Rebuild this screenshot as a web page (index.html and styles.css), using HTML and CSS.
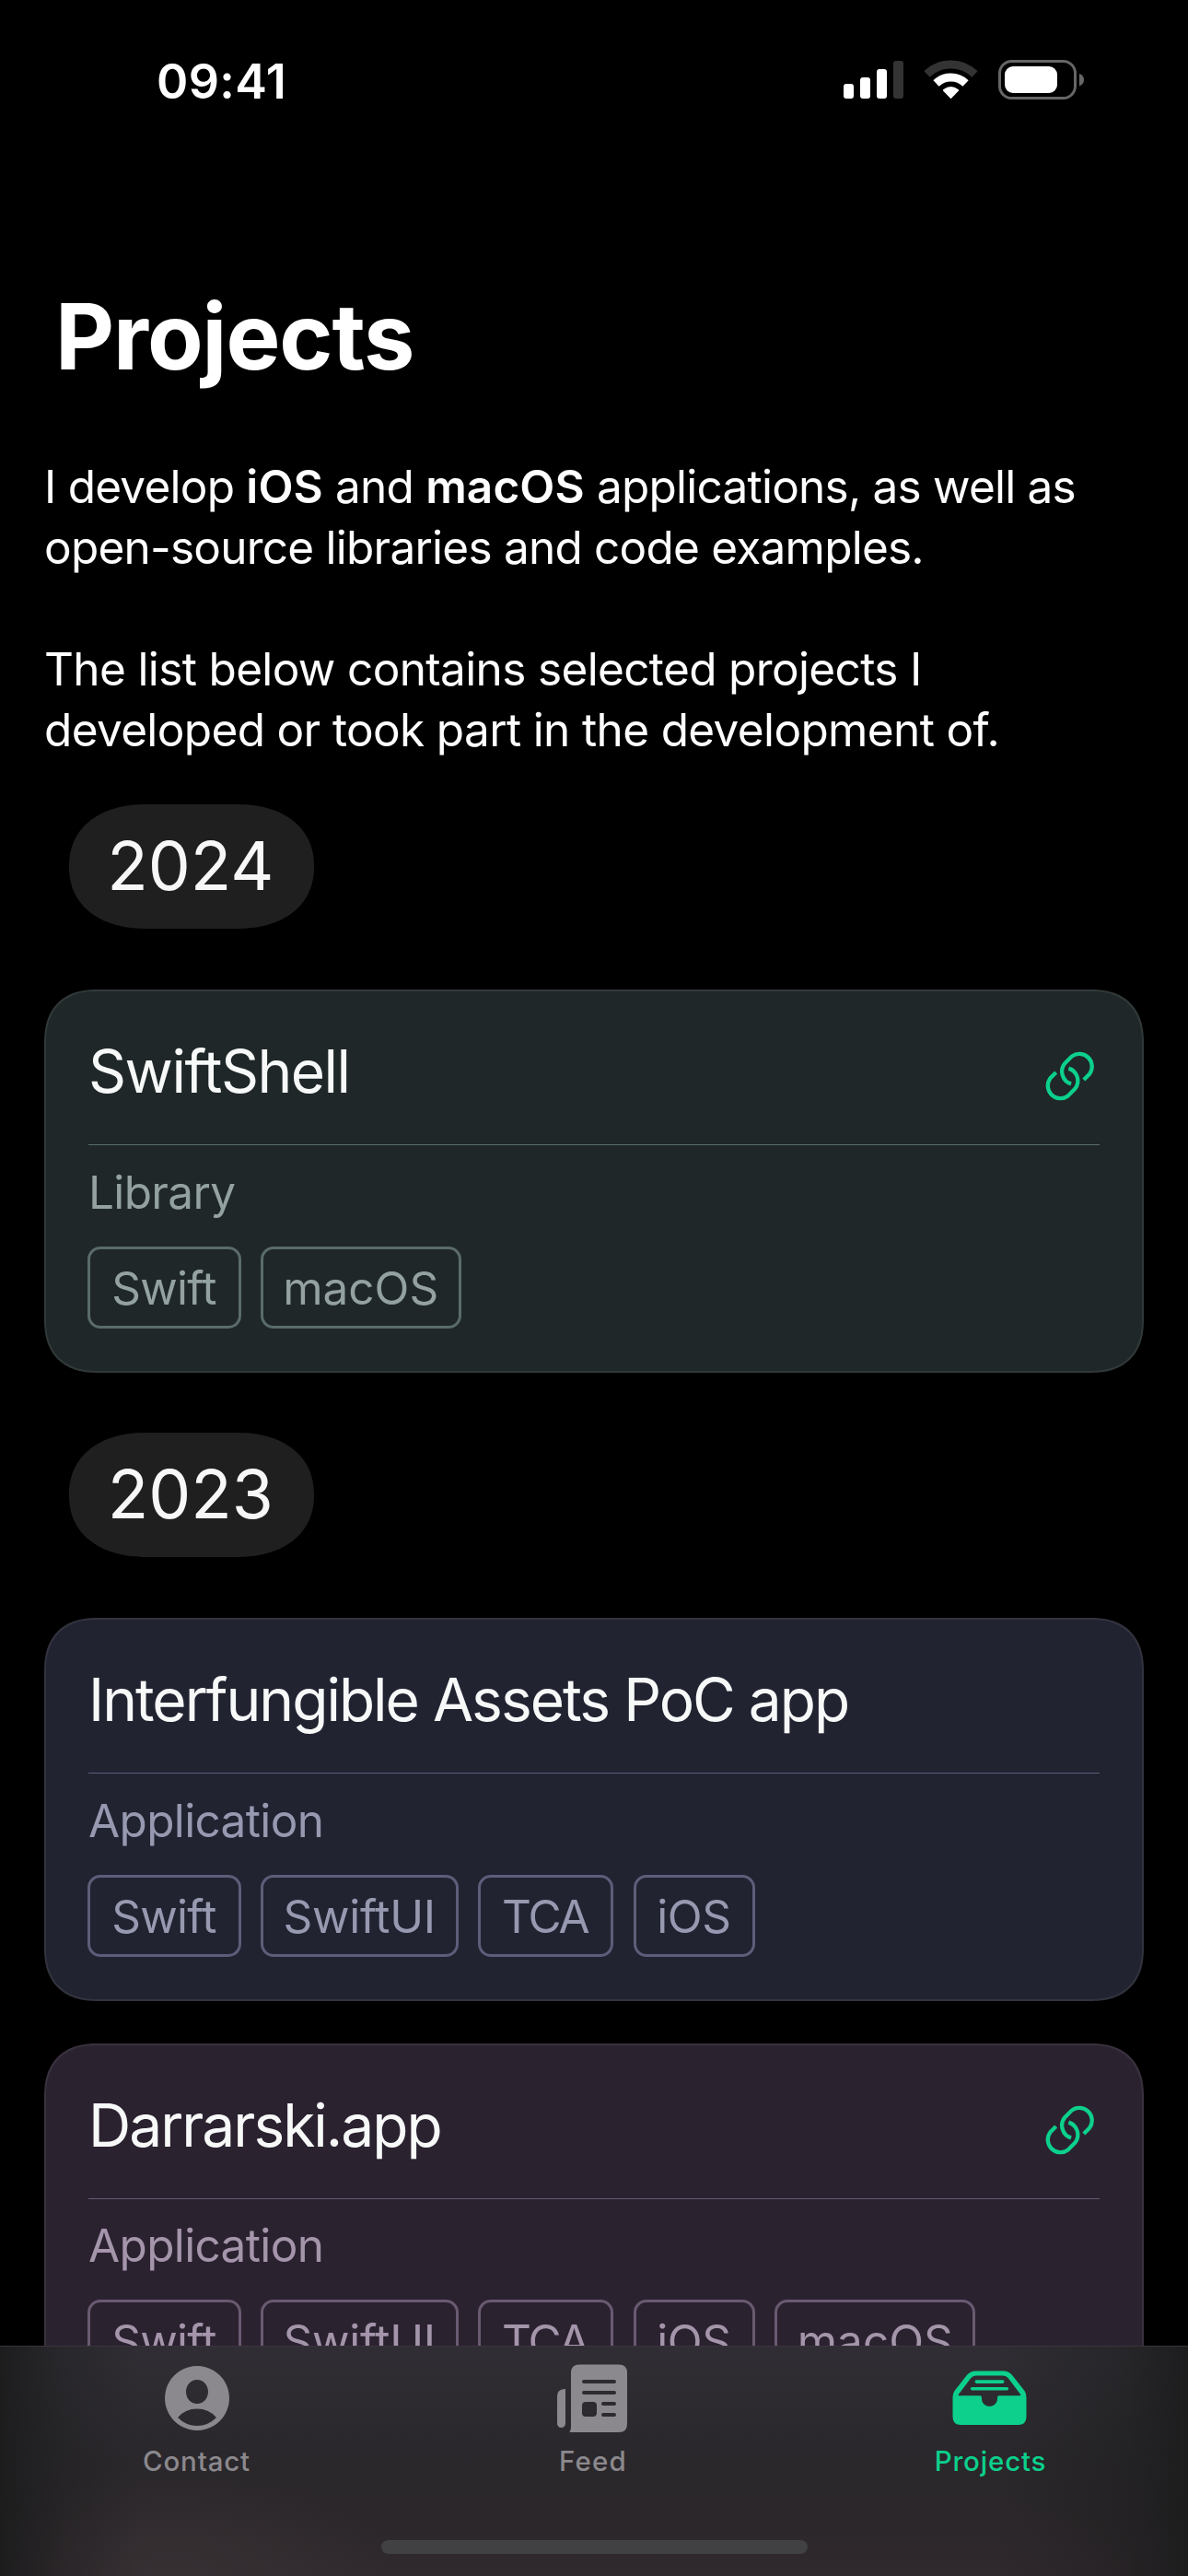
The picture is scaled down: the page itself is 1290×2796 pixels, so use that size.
FILE: index.html
```html
<!DOCTYPE html>
<html lang="en">
<head>
<meta charset="utf-8">
<title>Projects</title>
<link rel="stylesheet" href="styles.css">
</head>
<body>
<svg class="sprite" aria-hidden="true">
  <symbol id="link" viewBox="105 62 162 163">
    <g fill="none" stroke="currentColor" stroke-width="12.5">
      <path d="M230 155 L248 137 A40 40 0 0 0 192 81 L170 103 A41 41 0 0 0 190 168"/>
      <path d="M142 132 L124 150 A40 40 0 0 0 180 206 L202 184 A41 41 0 0 0 182 119"/>
    </g>
  </symbol>
</svg>
<div class="screen">
  <header class="status">
    <span class="time">09:41</span>
    <svg class="indicators" width="262" height="45" viewBox="916 64 262 45">
      <g fill="#fff">
        <rect x="916" y="91" width="11" height="16" rx="3"/>
        <rect x="934" y="84" width="11" height="23" rx="3"/>
        <rect x="952" y="75" width="11" height="32" rx="3"/>
        <rect x="970" y="66" width="11" height="41" rx="3" fill="#333"/>
      </g>
      <path fill="none" stroke="#333" stroke-width="9" d="M1006.5 80.5 A37.5 37.5 0 0 1 1058.500 80.500"/>
      <path fill="none" stroke="#fff" stroke-width="9" d="M1016.500 90.500 A23 23 0 0 1 1048.500 90.500"/>
      <path fill="#fff" d="M1032.500 107.300 L1024 98.600 Q1023.500 97.600 1024.500 97 Q1032.500 91.200 1040.500 97 Q1041.500 97.600 1041 98.600 Z"/>
      <rect x="1085.500" y="66.500" width="82" height="40" rx="13" fill="none" stroke="#666" stroke-width="3"/>
      <rect x="1091" y="72" width="57" height="29" rx="9" fill="#fff"/>
      <path d="M1172 80 Q1177 81.500 1177 86.500 Q1177 91.500 1172 93.500 Z" fill="#666"/>
    </svg>
  </header>

  <main class="content">
    <h1>Projects</h1>
    <div class="intro">
      <p><span class="lead">I develop <b>iOS</b> and <b>macOS</b> applications, as well as</span><br><span class="second">open-source libraries and code examples.</span></p>
      <p>The list below contains selected projects I<br>developed or took part in the development of.</p>
    </div>

    <h2 class="year">2024</h2>
    <article class="card green">
      <div class="card-head">
        <h3 class="t-swiftshell">SwiftShell</h3>
        <svg class="link"><use href="#link"/></svg>
      </div>
      <p class="kind">Library</p>
      <div class="tags"><span class="tag swift">Swift</span><span class="tag macos">macOS</span></div>
    </article>

    <h2 class="year">2023</h2>
    <article class="card blue">
      <div class="card-head"><h3>Interfungible Assets PoC app</h3></div>
      <p class="kind">Application</p>
      <div class="tags"><span class="tag swift">Swift</span><span class="tag swiftui">SwiftUI</span><span class="tag tca">TCA</span><span class="tag ios">iOS</span></div>
    </article>

    <article class="card purple">
      <div class="card-head">
        <h3>Darrarski.app</h3>
        <svg class="link"><use href="#link"/></svg>
      </div>
      <p class="kind">Application</p>
      <div class="tags"><span class="tag swift">Swift</span><span class="tag swiftui">SwiftUI</span><span class="tag tca">TCA</span><span class="tag ios">iOS</span><span class="tag macos">macOS</span></div>
    </article>
  </main>

  <footer class="dock">
    <nav class="tabs">
      <a class="tab">
        <svg width="90" height="80" viewBox="169 2562 90 80">
          <path fill="currentColor" fill-rule="evenodd" d="M214 2568 a35 35 0 1 0 .01 0 Z M214 2583 c7 0 12 6 12 13 c0 7 -5 13 -12 13 c-7 0 -12 -6 -12 -13 c0 -7 5 -13 12 -13 Z M193 2624 Q201 2614.500 214 2614.500 Q227 2614.500 235 2624 Q226 2633 214 2633 Q202 2633 193 2624 Z"/>
        </svg>
        <span>Contact</span>
      </a>
      <a class="tab">
        <svg width="90" height="80" viewBox="599 2562 90 80">
          <path fill="currentColor" fill-rule="evenodd" d="M629 2566.500 H672 Q681 2566.500 681 2575.500 V2631 Q681 2640 672 2640 H619 Q618 2639.500 619 2638.500 Q620 2637 620 2634 V2575.500 Q620 2566.500 629 2566.500 Z
            M634 2583 a2 2 0 0 0 0 4 H667 a2 2 0 0 0 0 -4 Z M634 2595 a2 2 0 0 0 0 4 H667 a2 2 0 0 0 0 -4 Z
            M636 2607 Q632 2607 632 2611 V2619 Q632 2623 636 2623 H644 Q648 2623 648 2619 V2611 Q648 2607 644 2607 Z
            M655 2607 a2 2 0 0 0 0 4 H667 a2 2 0 0 0 0 -4 Z M655 2619 a2 2 0 0 0 0 4 H667 a2 2 0 0 0 0 -4 Z"/>
          <path fill="currentColor" d="M614 2593 V2630.500 a4.500 4.500 0 0 1 -9 0 V2600.500 Q605 2593 614 2593 Z"/>
        </svg>
        <span class="feed-label">Feed</span>
      </a>
      <a class="tab active">
        <svg width="90" height="80" viewBox="1030.500 2562 90 80">
          <path fill="currentColor" fill-rule="evenodd" d="M1059 2573.500 H1089 Q1095 2573.500 1099 2578.500 L1112 2595 Q1114 2598 1114 2602 V2623 Q1114 2632 1105 2632 H1043 Q1034 2632 1034 2623 V2602 Q1034 2598 1036 2595 L1049 2578.500 Q1053 2573.500 1059 2573.500 Z
            M1060 2578.500 Q1056 2578.500 1053.500 2581.500 L1040.300 2599 Q1039.700 2600.200 1041 2600.200 H1063.500 Q1065.500 2600.200 1065.500 2602.500 V2603.500 C1065.500 2608.500 1069.500 2611.800 1074 2611.800 C1078.500 2611.800 1082.500 2608.500 1082.500 2603.500 V2602.500 Q1082.500 2600.200 1084.500 2600.200 H1107 Q1108.300 2600.200 1107.700 2599 L1094.500 2581.500 Q1092 2578.500 1088 2578.500 Z"/>
          <rect x="1058" y="2583.300" width="32" height="3.600" rx="1.800" fill="currentColor"/>
          <rect x="1053.300" y="2591" width="41.400" height="3.600" rx="1.800" fill="currentColor"/>
        </svg>
        <span>Projects</span>
      </a>
    </nav>
    <div class="home-indicator"></div>
  </footer>
</div>
</body>
</html>
```
FILE: styles.css
```css
* { box-sizing: border-box; margin: 0; padding: 0; }
body { background: #000; color: #fff; font-family: Inter, sans-serif; }
.sprite { display: none; }
.screen {
  width: 1290px;
  height: 2796px;
  display: flex;
  flex-direction: column;
  overflow: hidden;
}

/* Status bar */
.status {
  flex: none;
  height: 305px;
  padding: 53px 112px 0 170px;
  display: flex;
  justify-content: space-between;
  align-items: flex-start;
}
.time { font-size: 52px; line-height: 72px; font-weight: 600; letter-spacing: .4px; }
.indicators { margin-top: 11px; }

/* Scrolling content */
.content {
  height: 2241px;
  flex: none;
  overflow: hidden;
  padding: 0 48px;
  display: flex;
  flex-direction: column;
  align-items: stretch;
}
h1 { margin-left: 12px; font-size: 99px; line-height: 120px; font-weight: 700; letter-spacing: -1.05px; }
.intro {
  margin: 70px 0 48px;
  display: flex;
  flex-direction: column;
  gap: 66px;
  font-size: 49.5px;
  line-height: 66px;
  letter-spacing: -.64px;
  white-space: nowrap;
}
.lead { letter-spacing: -.77px; }
.second { letter-spacing: -.77px; }
.intro b { font-weight: 600; letter-spacing: .1px; }
.year {
  flex: none;
  align-self: flex-start;
  width: 265.500px;
  height: 134.500px;
  margin: 0 0 66.500px 27px;
  background: #1f1f1f;
  color: #f7f7f7;
  border-radius: 84px / 67px;
  corner-shape: superellipse(1.15);
  padding-right: 2px;
  text-align: center;
  font-size: 73px;
  line-height: 134px;
  font-weight: 400;
}
.card {
  flex: none;
  height: 415.500px;
  padding: 48px 46px 0 45px;
  border: 2px solid var(--edge);
  border-radius: 58px;
  corner-shape: superellipse(1.25);
  background: var(--fill);
  color: var(--soft);
  margin-bottom: 46px;
}
.card:has(+ .year) { margin-bottom: 65.500px; }
.green { --fill: #1f2729; --edge: #303838; --soft: #93a1a0; --line: #5a6b6b; }
.blue { --fill: #212331; --edge: #32333e; --soft: #9799b0; --line: #5c5e79; }
.purple { --fill: #2b2230; --edge: #39313d; --soft: #a495ab; --line: #695a71; }
.card-head {
  height: 119px;
  margin-left: 1px;
  border-bottom: 1px solid var(--line);
  display: flex;
  justify-content: space-between;
  align-items: flex-start;
}
h3 { font-size: 64px; line-height: 77px; font-weight: 400; letter-spacing: -1.99px; color: #f7f8f8; white-space: nowrap; }
.t-swiftshell { letter-spacing: -1.5px; }
.link { width: 55.500px; height: 56px; margin: 16px 4.500px 0 0; color: #0cd08c; }
.kind { margin: 17.500px 0 0 1px; font-size: 49.5px; line-height: 66px; letter-spacing: -.65px; }
.tags { margin: 26px 0 0 -.5px; display: flex; gap: 21.200px; }
.tag {
  flex: none;
  height: 89px;
  border: 3px solid var(--line);
  border-radius: 14px;
  text-align: center;
  font-size: 49.5px;
  line-height: 84px;
  white-space: nowrap;
}
.swift { width: 167px; letter-spacing: -.72px; }
.macos { width: 218px; }
.swiftui { width: 215px; letter-spacing: -.25px; }
.tca { width: 147.500px; letter-spacing: -2px; padding-right: 1.500px; }
.ios { width: 132.500px; letter-spacing: -.42px; padding-right: 1px; }

/* Tab bar */
.dock {
  height: 250px;
  flex: none;
  display: flex;
  flex-direction: column;
  align-items: center;
  justify-content: space-between;
  padding-bottom: 24px;
  border-top: 1px solid #38343b;
  background:
    linear-gradient(90deg, rgba(28,28,29,.95) 0, rgba(28,28,29,.35) 70px, rgba(28,28,29,0) 150px, rgba(28,28,29,0) 1080px, rgba(28,28,29,.45) 1220px, rgba(28,28,29,.95) 1290px),
    radial-gradient(240px 120px at 190px 100%, rgba(60,53,56,.6), rgba(60,53,56,0)),
    linear-gradient(#302e34 0, #2a282c 45%, #2b272a 70%, #30292d 100%);
}
.tabs { align-self: stretch; display: grid; grid-template-columns: 427px 434px 429px; padding-top: 15px; }
.tab {
  display: flex;
  flex-direction: column;
  align-items: center;
  color: #8b898d;
  font-size: 29.5px;
  line-height: 40px;
  font-weight: 500;
  letter-spacing: .82px;
}
.tab span { margin-top: 9px; }
.feed-label { letter-spacing: 1.2px; }
.active { color: #0cd08c; }
.home-indicator { width: 463px; height: 15px; border-radius: 8px; background: #414042; }
```
